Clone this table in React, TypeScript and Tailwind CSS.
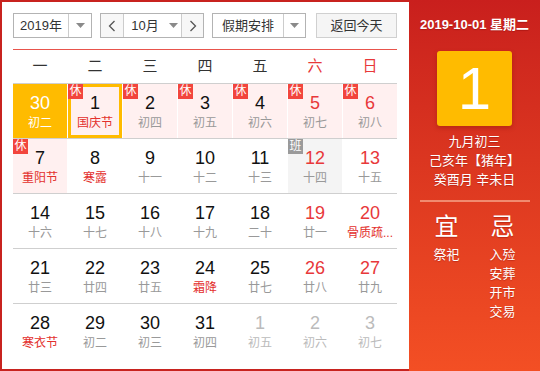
import React from "react";

type Day = {
  n: number;
  lunar: string;
  badge?: "休" | "班";
  festival?: boolean;
  other?: boolean;
  selected?: boolean;
  today?: boolean;
  weekend?: boolean;
};

const weeks: Day[][] = [
  [
    { n: 30, lunar: "初二", other: true, selected: true },
    { n: 1, lunar: "国庆节", badge: "休", festival: true, today: true },
    { n: 2, lunar: "初四", badge: "休" },
    { n: 3, lunar: "初五", badge: "休" },
    { n: 4, lunar: "初六", badge: "休" },
    { n: 5, lunar: "初七", badge: "休", weekend: true },
    { n: 6, lunar: "初八", badge: "休", weekend: true },
  ],
  [
    { n: 7, lunar: "重阳节", badge: "休", festival: true },
    { n: 8, lunar: "寒露", festival: true },
    { n: 9, lunar: "十一" },
    { n: 10, lunar: "十二" },
    { n: 11, lunar: "十三" },
    { n: 12, lunar: "十四", badge: "班", weekend: true },
    { n: 13, lunar: "十五", weekend: true },
  ],
  [
    { n: 14, lunar: "十六" },
    { n: 15, lunar: "十七" },
    { n: 16, lunar: "十八" },
    { n: 17, lunar: "十九" },
    { n: 18, lunar: "二十" },
    { n: 19, lunar: "廿一", weekend: true },
    { n: 20, lunar: "骨质疏...", festival: true, weekend: true },
  ],
  [
    { n: 21, lunar: "廿三" },
    { n: 22, lunar: "廿四" },
    { n: 23, lunar: "廿五" },
    { n: 24, lunar: "霜降", festival: true },
    { n: 25, lunar: "廿七" },
    { n: 26, lunar: "廿八", weekend: true },
    { n: 27, lunar: "廿九", weekend: true },
  ],
  [
    { n: 28, lunar: "寒衣节", festival: true },
    { n: 29, lunar: "初二" },
    { n: 30, lunar: "初三" },
    { n: 31, lunar: "初四" },
    { n: 1, lunar: "初五", other: true },
    { n: 2, lunar: "初六", other: true },
    { n: 3, lunar: "初七", other: true },
  ],
];

const weekdays = ["一", "二", "三", "四", "五", "六", "日"];

const Caret = () => (
  <svg width="9" height="5" viewBox="0 0 9 5">
    <path d="M0 0 H9 L4.5 5 Z" fill="#8a8a8a" />
  </svg>
);

const Chevron = ({ left }: { left?: boolean }) => (
  <svg width="8" height="12" viewBox="0 0 8 12">
    <path
      d={left ? "M6.5 1 L1.5 6 L6.5 11" : "M1.5 1 L6.5 6 L1.5 11"}
      fill="none"
      stroke="#555"
      strokeWidth="1.3"
    />
  </svg>
);

const Cell = ({ d }: { d: Day }) => {
  let bg = "bg-white";
  if (d.selected) bg = "bg-[#ffbb00]";
  else if (d.badge === "休") bg = "bg-[#fff0f0]";
  else if (d.badge === "班") bg = "bg-[#f4f4f4]";

  let numColor = "text-[#111]";
  if (d.selected) numColor = "text-white";
  else if (d.other) numColor = "text-[#bbb]";
  else if (d.weekend) numColor = "text-[#e8383a]";

  let lunarColor = "text-[#999]";
  if (d.selected) lunarColor = "text-white";
  else if (d.other) lunarColor = "text-[#bbb]";
  else if (d.festival) lunarColor = "text-[#e3302d]";

  return (
    <div
      className={`relative h-[54px] flex flex-col items-center ${bg} ${
        d.today ? "border-[3px] border-[#ffbb00] pt-[6px]" : "pt-[9px]"
      }`}
    >
      {d.badge && (
        <span
          className={`absolute ${
            d.today ? "-top-[3px] -left-[3px]" : "top-0 left-0"
          } w-[15px] h-[15px] text-[12px] leading-[15px] text-center text-white ${
            d.badge === "休" ? "bg-[#f2453d]" : "bg-[#9a9a9a]"
          }`}
        >
          {d.badge}
        </span>
      )}
      <span className={`text-[18px] leading-[20px] ${numColor}`}>{d.n}</span>
      <span className={`mt-[2px] text-[12px] leading-[16px] whitespace-nowrap ${lunarColor}`}>
        {d.lunar}
      </span>
    </div>
  );
};

export default function App() {
  return (
    <div
      className="w-[540px] h-[371px] flex overflow-hidden"
      style={{ fontFamily: '"Liberation Sans", "Noto Sans CJK SC", sans-serif' }}
    >
      {/* Left calendar */}
      <div className="w-[409px] h-full border-2 border-r-0 border-[#c8231f] pl-[11px] pr-[12px] pt-[11px]">
        {/* Toolbar */}
        <div className="flex h-[25px] text-[13px] text-[#333]">
          <div className="w-[79px] flex border border-[#b3b3b3] bg-white">
            <div className="w-[54px] flex items-center justify-center">2019年</div>
            <div className="flex-1 border-l border-[#ccc] flex items-center justify-center">
              <Caret />
            </div>
          </div>
          <div className="ml-[8px] w-[104px] flex border border-[#b3b3b3] bg-white">
            <div className="w-[22px] bg-[#f7f7f7] flex items-center justify-center">
              <Chevron left />
            </div>
            <div className="w-[59px] border-x border-[#ccc] flex items-center justify-center gap-[10px] pl-[4px]">
              <span>10月</span>
              <Caret />
            </div>
            <div className="flex-1 bg-[#f7f7f7] flex items-center justify-center">
              <Chevron />
            </div>
          </div>
          <div className="ml-[8px] w-[94px] flex border border-[#b3b3b3] bg-white">
            <div className="w-[70px] flex items-center justify-center">假期安排</div>
            <div className="flex-1 border-l border-[#ccc] flex items-center justify-center">
              <Caret />
            </div>
          </div>
          <button className="ml-[10px] w-[81px] border border-[#d0d0d0] bg-[#f5f5f5] flex items-center justify-center">
            返回今天
          </button>
        </div>

        <div className="mt-[11px] h-px bg-[#e8544c]" />

        {/* Weekday header */}
        <div className="grid grid-cols-7 gap-x-px h-[33px] items-center text-[15px]">
          {weekdays.map((w, i) => (
            <div key={w} className={`text-center ${i >= 5 ? "text-[#e8383a]" : "text-[#333]"}`}>
              {w}
            </div>
          ))}
        </div>

        {/* Grid */}
        {weeks.map((week, r) => (
          <div key={r} className="grid grid-cols-7 gap-x-px border-t border-[#cfcfcf]">
            {week.map((d, i) => (
              <Cell key={i} d={d} />
            ))}
          </div>
        ))}
      </div>

      {/* Right panel */}
      <div className="w-[131px] h-full bg-linear-to-b from-[#c91f1d] to-[#f34f24] text-white flex flex-col items-center pt-[16px] [text-shadow:0_1px_1px_rgba(120,0,0,0.35)]">
        <div className="text-[13px] leading-[18px] font-bold">2019-10-01 星期二</div>
        <div className="mt-[17px] w-[75px] h-[75px] rounded-[3px] bg-[#ffbb00] shadow-[0_2px_4px_rgba(120,20,0,0.35)] flex items-center justify-center text-[60px] leading-none [text-shadow:none]">
          1
        </div>
        <div className="mt-[6px] text-[13px] leading-[19px] text-center">
          <div>九月初三</div>
          <div>己亥年【猪年】</div>
          <div>癸酉月 辛未日</div>
        </div>
        <div className="mt-[11px] w-[110px] h-[2px] bg-[#f08a70]" />
        <div className="mt-[11px] w-[112px] grid grid-cols-2">
          <div className="flex flex-col items-center">
            <div className="text-[24px] leading-[28px]">宜</div>
            <div className="mt-[4px] text-[13px] leading-[19px] text-center">
              <div>祭祀</div>
            </div>
          </div>
          <div className="flex flex-col items-center">
            <div className="text-[24px] leading-[28px]">忌</div>
            <div className="mt-[4px] text-[13px] leading-[19px] text-center">
              <div>入殓</div>
              <div>安葬</div>
              <div>开市</div>
              <div>交易</div>
            </div>
          </div>
        </div>
      </div>
    </div>
  );
}
